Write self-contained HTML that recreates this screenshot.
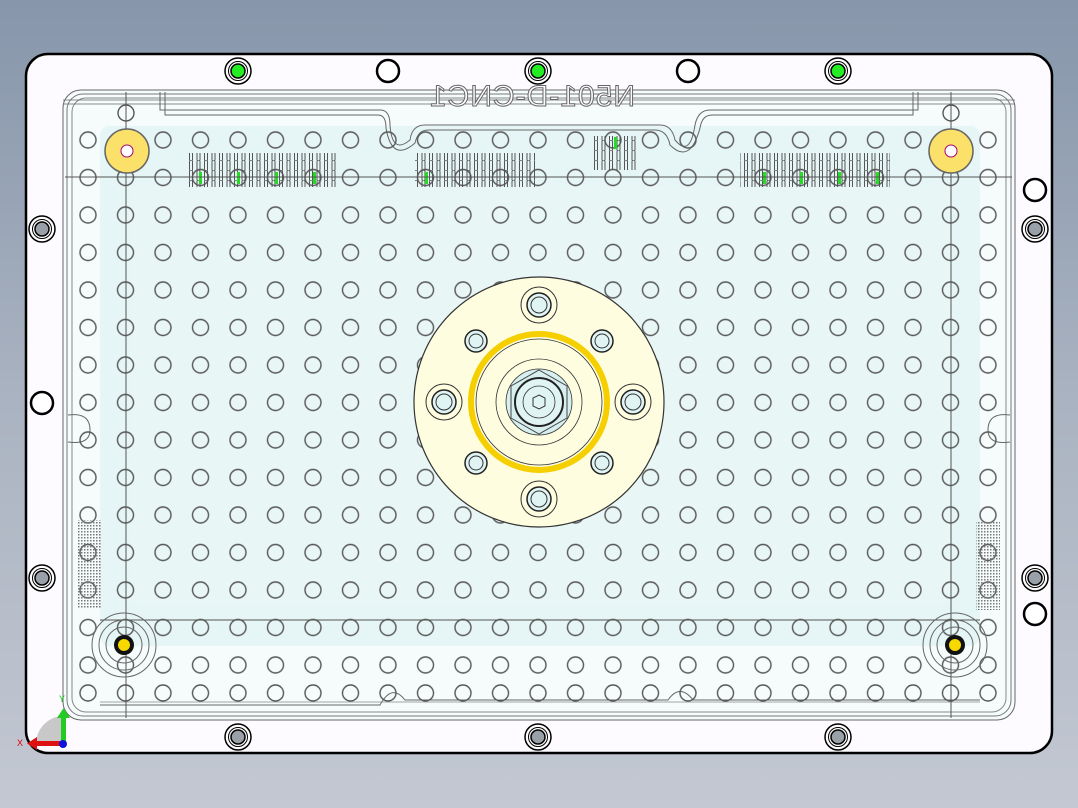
<!DOCTYPE html>
<html><head><meta charset="utf-8"><style>
html,body{margin:0;padding:0;width:1078px;height:808px;overflow:hidden}
body{background:linear-gradient(#8796ab,#aab3c1 50%,#c3c8d2)}
svg{position:absolute;left:0;top:0}
</style></head><body>
<svg width="1078" height="808" viewBox="0 0 1078 808" xmlns="http://www.w3.org/2000/svg">
<defs>
<pattern id="holes" x="69.25" y="121.25" width="37.5" height="37.5" patternUnits="userSpaceOnUse">
<circle cx="18.75" cy="18.75" r="8" fill="none" stroke="#555" stroke-width="1.4"/>
</pattern>
<pattern id="holes2" x="69.25" y="674" width="37.5" height="37.5" patternUnits="userSpaceOnUse">
<circle cx="18.75" cy="19" r="8" fill="none" stroke="#555" stroke-width="1.4"/>
</pattern>
<pattern id="slots" x="0" y="0" width="7.5" height="10" patternUnits="userSpaceOnUse">
<rect x="2" y="0" width="3" height="40" rx="1.5" fill="none" stroke="#555" stroke-width="1"/>
</pattern>
<pattern id="dots" x="0" y="0" width="3" height="3" patternUnits="userSpaceOnUse">
<rect width="1.5" height="1.5" fill="#777"/>
</pattern>
</defs>
<rect x="26" y="54" width="1026" height="699" rx="22" fill="#fdfbff" stroke="#000" stroke-width="2.5"/>
<rect x="63" y="90" width="952" height="630" rx="18" fill="#f6fcfc" stroke="#666" stroke-width="1"/>
<rect x="67" y="94" width="944" height="622" rx="16" fill="none" stroke="#777" stroke-width="1"/>
<rect x="72" y="98" width="934" height="614" rx="14" fill="none" stroke="#888" stroke-width="1"/>
<rect x="100" y="126" width="880" height="520" rx="10" fill="#e6f5f5"/>
<rect x="130" y="185" width="820" height="420" fill="#e8f6f6"/>
<path d="M160 92 V110 H380 Q390 110 390 125 Q392 155 410 140 Q412 125 425 125 H660 Q672 125 675 140 Q690 158 695 125 Q698 110 710 110 H918 V92" fill="none" stroke="#666" stroke-width="1"/>
<path d="M165 92 V115 H378 Q386 115 386 128 Q392 163 415 143 Q418 130 428 130 H655 Q667 130 670 145 Q690 165 700 128 Q702 115 712 115 H913 V92" fill="none" stroke="#666" stroke-width="1"/>
<line x1="63" y1="100" x2="1015" y2="100" stroke="#666" stroke-width="0.8"/>
<line x1="63" y1="104" x2="1015" y2="104" stroke="#666" stroke-width="0.8"/>
<path d="M100 705 H380 Q392 683 405 700 H668 Q680 683 693 700 H980" fill="none" stroke="#666" stroke-width="1"/>
<line x1="100" y1="702" x2="980" y2="702" stroke="#888" stroke-width="0.8"/>
<path d="M68 415 Q90 412 90 430 Q90 445 68 442" fill="none" stroke="#666"/>
<path d="M1010 415 Q988 412 988 430 Q988 445 1010 442" fill="none" stroke="#666"/>
<rect x="69" y="121" width="938" height="563" fill="url(#holes)"/>
<rect x="69" y="680" width="938" height="26" fill="url(#holes2)"/>
<g fill="none" stroke="#555" stroke-width="1.4">
<circle cx="126" cy="113" r="8"/><circle cx="951" cy="113" r="8"/>
</g>
<rect x="186" y="153" width="150" height="34" fill="url(#slots)"/>
<rect x="415" y="153" width="120" height="34" fill="url(#slots)"/>
<rect x="592" y="136" width="45" height="34" fill="url(#slots)"/>
<rect x="740" y="153" width="150" height="34" fill="url(#slots)"/>
<g fill="#22dd22"><rect x="199" y="172" width="3" height="12"/><rect x="237" y="172" width="3" height="12"/><rect x="275" y="172" width="3" height="12"/><rect x="313" y="172" width="3" height="12"/><rect x="425" y="172" width="3" height="12"/><rect x="614" y="137" width="3" height="12"/><rect x="763" y="172" width="3" height="12"/><rect x="800" y="172" width="3" height="12"/><rect x="838" y="172" width="3" height="12"/><rect x="876" y="172" width="3" height="12"/></g>
<g stroke="#555" stroke-width="1">
<line x1="126" y1="92" x2="126" y2="718"/><line x1="951" y1="92" x2="951" y2="718"/>
<line x1="65" y1="177" x2="1012" y2="177"/>
<line x1="100" y1="620" x2="980" y2="620"/>
</g>
<rect x="77" y="520" width="24" height="88" fill="url(#dots)"/>
<rect x="976" y="522" width="24" height="88" fill="url(#dots)"/>
<circle cx="127" cy="151" r="22" fill="#fbe06a" stroke="#666" stroke-width="1.5"/>
<circle cx="127" cy="151" r="6" fill="#fff" stroke="#a07" stroke-width="1"/>
<circle cx="951" cy="151" r="22" fill="#fbe06a" stroke="#666" stroke-width="1.5"/>
<circle cx="951" cy="151" r="6" fill="#fff" stroke="#a07" stroke-width="1"/>
<g fill="none" stroke="#666" stroke-width="1">
<circle cx="124" cy="645" r="32"/><circle cx="124" cy="645" r="25"/><circle cx="124" cy="645" r="18"/>
<circle cx="955" cy="645" r="32"/><circle cx="955" cy="645" r="25"/><circle cx="955" cy="645" r="18"/>
</g>
<circle cx="124" cy="645" r="10" fill="#111"/><circle cx="124" cy="645" r="6" fill="#f7d900"/>
<circle cx="955" cy="645" r="10" fill="#111"/><circle cx="955" cy="645" r="6" fill="#f7d900"/>
<text transform="translate(1078,0) scale(-1,1)" x="443" y="106" font-family="Liberation Sans, sans-serif" font-size="30" fill="#fdfbff" stroke="#666" stroke-width="1" letter-spacing="1">N501-D-CNC1</text>
<circle cx="539" cy="402" r="125" fill="#fffde0" stroke="#333" stroke-width="1.2"/>
<circle cx="539" cy="402" r="68" fill="none" stroke="#f5cf00" stroke-width="6"/>
<circle cx="539" cy="402" r="63" fill="none" stroke="#333" stroke-width="0.8"/>
<circle cx="539" cy="402" r="43" fill="none" stroke="#333" stroke-width="0.8"/>
<circle cx="539" cy="402" r="33" fill="#d8efef" stroke="#333" stroke-width="0.8"/>
<polygon points="539,370 567,386 567,418 539,434 511,418 511,386" fill="#d8efef" stroke="#444" stroke-width="1"/>
<circle cx="539" cy="402" r="24" fill="#e0f4f4" stroke="#222" stroke-width="2"/>
<circle cx="539" cy="402" r="16" fill="none" stroke="#333" stroke-width="0.8"/>
<polygon points="539,395 545,398 545,406 539,409 533,406 533,398" fill="none" stroke="#333"/>
<g fill="#e0f4f4" stroke="#222" stroke-width="1.5">
<circle cx="539" cy="305" r="12"/><circle cx="539" cy="499" r="12"/><circle cx="444" cy="402" r="12"/><circle cx="633" cy="402" r="12"/>
<circle cx="476" cy="341" r="11"/><circle cx="602" cy="341" r="11"/><circle cx="476" cy="463" r="11"/><circle cx="602" cy="463" r="11"/>
</g>
<g fill="none" stroke="#333" stroke-width="1">
<circle cx="539" cy="305" r="18"/><circle cx="539" cy="499" r="18"/><circle cx="444" cy="402" r="18"/><circle cx="633" cy="402" r="18"/>
<circle cx="539" cy="305" r="8"/><circle cx="539" cy="499" r="8"/><circle cx="444" cy="402" r="8"/><circle cx="633" cy="402" r="8"/>
<circle cx="476" cy="341" r="7"/><circle cx="602" cy="341" r="7"/><circle cx="476" cy="463" r="7"/><circle cx="602" cy="463" r="7"/>
</g>
<g stroke="#000" stroke-width="1.5">
<g fill="#fff"><circle cx="238" cy="71" r="13"/><circle cx="538" cy="71" r="13"/><circle cx="838" cy="71" r="13"/>
<circle cx="238" cy="737" r="13"/><circle cx="538" cy="737" r="13"/><circle cx="838" cy="737" r="13"/>
<circle cx="42" cy="229" r="13"/><circle cx="42" cy="578" r="13"/><circle cx="1035" cy="229" r="13"/><circle cx="1035" cy="578" r="13"/></g>
<g fill="#fff" stroke-width="2.5"><circle cx="388" cy="71" r="11"/><circle cx="688" cy="71" r="11"/><circle cx="42" cy="403" r="11"/><circle cx="1035" cy="190" r="11"/><circle cx="1035" cy="614" r="11"/></g>
<g fill="none" stroke-width="1"><circle cx="238" cy="71" r="9.5"/><circle cx="538" cy="71" r="9.5"/><circle cx="838" cy="71" r="9.5"/>
<circle cx="238" cy="737" r="9.5"/><circle cx="538" cy="737" r="9.5"/><circle cx="838" cy="737" r="9.5"/>
<circle cx="42" cy="229" r="9.5"/><circle cx="42" cy="578" r="9.5"/><circle cx="1035" cy="229" r="9.5"/><circle cx="1035" cy="578" r="9.5"/></g>
<g fill="#22ee22" stroke-width="1.5"><circle cx="238" cy="71" r="7"/><circle cx="538" cy="71" r="7"/><circle cx="838" cy="71" r="7"/></g>
<g fill="#9aa0a8" stroke-width="1.5"><circle cx="238" cy="737" r="7"/><circle cx="538" cy="737" r="7"/><circle cx="838" cy="737" r="7"/>
<circle cx="42" cy="229" r="7"/><circle cx="42" cy="578" r="7"/><circle cx="1035" cy="229" r="7"/><circle cx="1035" cy="578" r="7"/></g>
</g>
<path d="M63 716 A28 28 0 0 0 36 744 L63 744 Z" fill="#c8c8c8"/>
<rect x="61" y="716" width="5" height="28" fill="#22cc22"/>
<polygon points="57,718 63.5,708 70,718" fill="#22cc22"/>
<rect x="36" y="741" width="27" height="5" fill="#dd1111"/>
<polygon points="37,737 27,743.5 37,750" fill="#dd1111"/>
<circle cx="63" cy="744" r="4" fill="#1111dd"/>
<text x="17" y="746" font-family="Liberation Sans, sans-serif" font-size="9" fill="#d00">X</text>
<text x="59" y="702" font-family="Liberation Sans, sans-serif" font-size="9" fill="#0c0">Y</text>
</svg>
</body></html>
